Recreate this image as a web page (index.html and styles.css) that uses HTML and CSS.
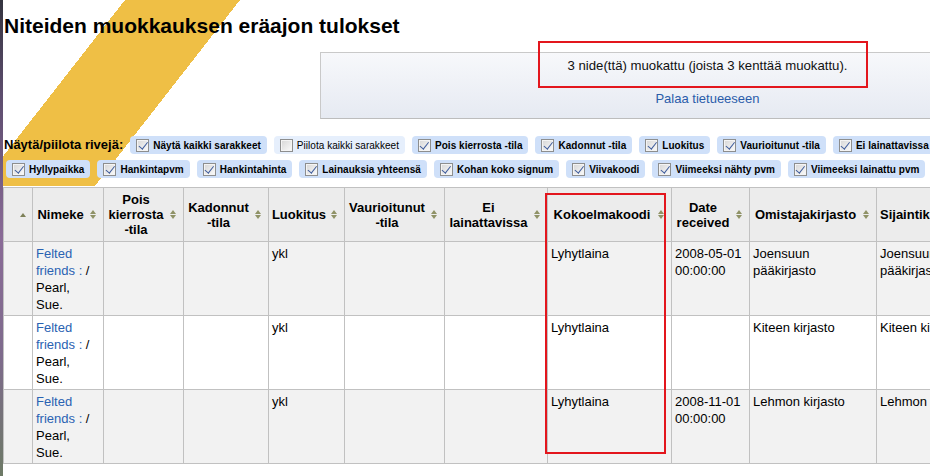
FILE: index.html
```html
<!DOCTYPE html>
<html lang="fi">
<head>
<meta charset="utf-8">
<title>Niteiden muokkauksen eräajon tulokset</title>
<link rel="stylesheet" href="styles.css">
</head>
<body>
<main class="page">
  <h1 class="title">Niteiden muokkauksen eräajon tulokset</h1>

  <div class="message">
    <p class="message-text">3 nide(ttä) muokattu (joista 3 kenttää muokattu).</p>
    <a class="message-link" href="#">Palaa tietueeseen</a>
    <span class="mark mark-message"></span>
  </div>

  <div class="toggles">
    <span class="toggles-label">Näytä/piilota rivejä:</span>
    <label class="chip"><span class="cb on"></span>Näytä kaikki sarakkeet</label>
    <label class="chip chip-plain"><span class="cb"></span>Piilota kaikki sarakkeet</label>
    <label class="chip"><span class="cb on"></span>Pois kierrosta -tila</label>
    <label class="chip"><span class="cb on"></span>Kadonnut -tila</label>
    <label class="chip"><span class="cb on"></span>Luokitus</label>
    <label class="chip"><span class="cb on"></span>Vaurioitunut -tila</label>
    <label class="chip"><span class="cb on"></span>Ei lainattavissa</label>
    <label class="chip"><span class="cb on"></span>Hyllypaikka</label>
    <label class="chip"><span class="cb on"></span>Hankintapvm</label>
    <label class="chip"><span class="cb on"></span>Hankintahinta</label>
    <label class="chip"><span class="cb on"></span>Lainauksia yhteensä</label>
    <label class="chip"><span class="cb on"></span>Kohan koko signum</label>
    <label class="chip"><span class="cb on"></span>Viivakoodi</label>
    <label class="chip"><span class="cb on"></span>Viimeeksi nähty pvm</label>
    <label class="chip"><span class="cb on"></span>Viimeeksi lainattu pvm</label>
  </div>

  <div class="table-wrap">
    <table class="results">
      <colgroup>
        <col class="w-sel">
        <col class="w-title">
        <col class="w-pois">
        <col class="w-kad">
        <col class="w-luok">
        <col class="w-vaur">
        <col class="w-ei">
        <col class="w-koko">
        <col class="w-date">
        <col class="w-omis">
        <col class="w-sij">
        <col class="w-hyl">
      </colgroup>
      <thead>
        <tr>
          <th><div class="th-inner th-end"><span class="sort-asc"></span></div></th>
          <th><div class="th-inner"><span class="th-text">Nimeke</span><span class="sort"></span></div></th>
          <th><div class="th-inner"><span class="th-text">Pois kierrosta -tila</span><span class="sort"></span></div></th>
          <th><div class="th-inner"><span class="th-text">Kadonnut -tila</span><span class="sort"></span></div></th>
          <th><div class="th-inner"><span class="th-text">Luokitus</span><span class="sort"></span></div></th>
          <th><div class="th-inner"><span class="th-text">Vaurioitunut -tila</span><span class="sort"></span></div></th>
          <th><div class="th-inner"><span class="th-text">Ei lainattavissa</span><span class="sort"></span></div></th>
          <th><div class="th-inner"><span class="th-text">Kokoelmakoodi</span><span class="sort"></span></div></th>
          <th><div class="th-inner"><span class="th-text">Date received</span><span class="sort"></span></div></th>
          <th><div class="th-inner"><span class="th-text">Omistajakirjasto</span><span class="sort"></span></div></th>
          <th><div class="th-inner"><span class="th-text th-left">Sijaintikirjasto</span><span class="sort"></span></div></th>
          <th><div class="th-inner"><span class="th-text">Hyllypaikka</span><span class="sort"></span></div></th>
        </tr>
      </thead>
      <tbody>
        <tr>
          <td></td>
          <td><a href="#">Felted friends :</a> / Pearl, Sue.</td>
          <td></td>
          <td></td>
          <td>ykl</td>
          <td></td>
          <td></td>
          <td>Lyhytlaina</td>
          <td>2008-05-01 00:00:00</td>
          <td>Joensuun pääkirjasto</td>
          <td>Joensuun pääkirjasto</td>
          <td></td>
        </tr>
        <tr>
          <td></td>
          <td><a href="#">Felted friends :</a> / Pearl, Sue.</td>
          <td></td>
          <td></td>
          <td>ykl</td>
          <td></td>
          <td></td>
          <td>Lyhytlaina</td>
          <td></td>
          <td>Kiteen kirjasto</td>
          <td>Kiteen kirjasto</td>
          <td></td>
        </tr>
        <tr>
          <td></td>
          <td><a href="#">Felted friends :</a> / Pearl, Sue.</td>
          <td></td>
          <td></td>
          <td>ykl</td>
          <td></td>
          <td></td>
          <td>Lyhytlaina</td>
          <td>2008-11-01 00:00:00</td>
          <td>Lehmon kirjasto</td>
          <td>Lehmon kirjasto</td>
          <td></td>
        </tr>
      </tbody>
    </table>
    <span class="mark mark-column"></span>
  </div>
</main>
</body>
</html>
```

FILE: styles.css
```css
* { box-sizing: border-box; }

html {
  height: 100%;
  overflow: hidden;
  background:
    linear-gradient(to bottom, #34343f 0%, #5d4d6e 20%, #8a6b97 50%, #7e6b8c 75%, #6d7a66 100%) 0 0 / 3px 100% no-repeat,
    linear-gradient(127.95deg, transparent 98.5px, #efbf45 98.5px, #efbf45 189.2px, transparent 189.2px) 0 0 / 240px 186px no-repeat,
    #ffffff;
}

body {
  margin: 0;
  overflow: hidden;
  font-family: "Liberation Sans", Arial, sans-serif;
  color: #000;
}

.page {
  padding-left: 4px;
}

.title {
  margin: 14px 0 0;
  font-size: 21px;
  line-height: 24px;
  font-weight: bold;
  white-space: nowrap;
}

/* result message */
.message {
  position: relative;
  width: 775px;
  margin: 14px 0 0 316px;
  padding: 5px 0 11px;
  border: 1px solid #c9c9c9;
  border-bottom-color: #bdbdbd;
  background: linear-gradient(#f7f8fb, #e6eaf2);
  text-align: center;
  line-height: 16px;
}

.message-text {
  margin: 0 0 16px;
  font-size: 13.2px;
  color: #111;
}

.message-link {
  font-size: 13px;
  color: #2a5caa;
  text-decoration: none;
}

.mark {
  position: absolute;
  border: 2px solid #e3161d;
  pointer-events: none;
}

.mark-message {
  left: 217px;
  top: -12px;
  width: 330px;
  height: 47px;
}

/* column toggles */
.toggles {
  display: flex;
  flex-wrap: wrap;
  align-items: center;
  gap: 6px 5px;
  width: 960px;
  margin-top: 17px;
}

.toggles-label {
  font-size: 13px;
  font-weight: bold;
  line-height: 18px;
  margin-right: -1px;
  white-space: nowrap;
}

.chip {
  display: inline-flex;
  align-items: center;
  gap: 4px;
  height: 18px;
  margin-left: 2px;
  padding: 0 6px;
  border-radius: 4px;
  background: #cfe0f9;
  font-size: 10px;
  letter-spacing: 0.04px;
  font-weight: bold;
  white-space: nowrap;
}

.toggles-label + .chip {
  margin-left: 3px;
}

.chip-plain {
  background: #e6effc;
  font-weight: normal;
}

.cb {
  position: relative;
  flex: none;
  width: 13px;
  height: 13px;
  border: 1px solid #8d8e8e;
  box-shadow: inset 0 0 0 1px #f4f4f4;
  background: linear-gradient(135deg, #d6d6d6, #fbfbfb);
}

.cb.on::after {
  content: "";
  position: absolute;
  left: 3.5px;
  top: 0.5px;
  width: 3.5px;
  height: 7.5px;
  border: solid #3e5c9c;
  border-width: 0 1.6px 1.6px 0;
  transform: rotate(38deg);
}

/* table */
.table-wrap {
  position: relative;
  margin: 9px 0 0 -1px;
}

.results {
  border-collapse: collapse;
  table-layout: fixed;
  width: 1123px;
  font-size: 13px;
  line-height: 17px;
}

.w-sel { width: 29px; }
.w-title { width: 71px; }
.w-pois { width: 80px; }
.w-kad { width: 85px; }
.w-luok { width: 76px; }
.w-vaur { width: 100px; }
.w-ei { width: 103px; }
.w-koko { width: 124px; }
.w-date { width: 78px; }
.w-omis { width: 127px; }
.w-sij { width: 130px; }
.w-hyl { width: 120px; }

.results th,
.results td {
  border: 1px solid #c1c1c1;
}

.results th {
  padding: 4px 6px 4px 3px;
  background: #ececec;
  font-weight: bold;
  line-height: 15px;
  vertical-align: middle;
}

.th-inner {
  display: flex;
  align-items: center;
  justify-content: center;
  gap: 5px;
}

.th-end {
  justify-content: flex-end;
}

.th-text {
  flex: 1;
  text-align: center;
}

.th-left {
  text-align: left;
  white-space: nowrap;
}

.sort {
  flex: none;
  display: flex;
  flex-direction: column;
  gap: 1px;
  width: 7px;
}

.sort::before,
.sort::after {
  content: "";
  width: 0;
  height: 0;
  border-left: 3.5px solid transparent;
  border-right: 3.5px solid transparent;
}

.sort::before {
  border-bottom: 4px solid #8f9266;
}

.sort::after {
  border-top: 4px solid #8f9266;
}

.sort-asc {
  width: 0;
  height: 0;
  border-left: 3.5px solid transparent;
  border-right: 3.5px solid transparent;
  border-bottom: 4px solid #7d8058;
}

.results td {
  padding: 3px 5px 2px 3px;
  vertical-align: top;
  background: #fff;
}

.results tbody tr:nth-child(odd) td {
  background: #f2f2f2;
}

.results a {
  color: #2a62b2;
  text-decoration: none;
}

.mark-column {
  left: 542px;
  top: 6px;
  width: 121px;
  height: 261px;
}
```
